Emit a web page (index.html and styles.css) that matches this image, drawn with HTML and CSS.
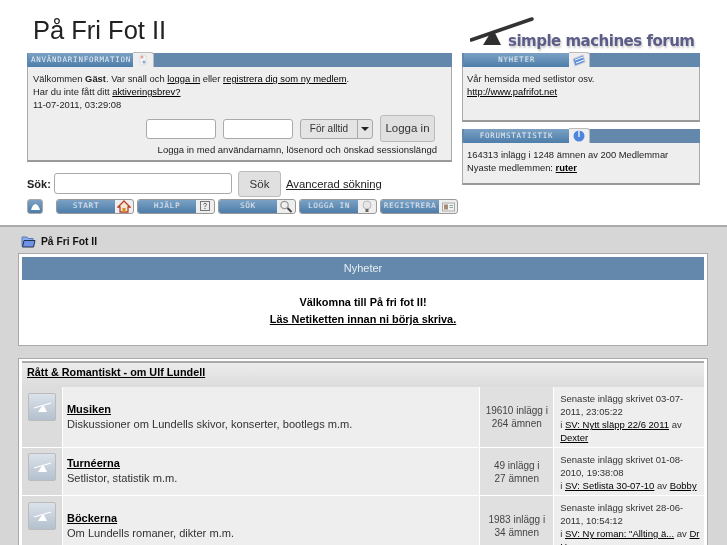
FILE: index.html
```html
<!DOCTYPE html>
<html lang="sv">
<head>
<meta charset="utf-8">
<title>På Fri Fot II</title>
<link rel="stylesheet" href="styles.css">
</head>
<body>
<header class="head">
  <div class="left">
    <h1 class="title">På Fri Fot II</h1>
    <section class="panel user">
      <div class="tabbar">
        <span class="tab wide">ANVÄNDARINFORMATION</span>
        <span class="tabicon">
          <svg width="12" height="12" viewBox="0 0 12 12"><rect x="3" y="1" width="6" height="10" rx="2" fill="#f6f6f6" stroke="#ddd"/><circle cx="5" cy="3" r="1.5" fill="#e8a0a0"/><circle cx="7" cy="8" r="1.6" fill="#8fa8cc"/></svg>
        </span>
      </div>
      <div class="body">
        <p>Välkommen <b>Gäst</b>. Var snäll och <a href="#">logga in</a> eller <a href="#">registrera dig som ny medlem</a>.</p>
        <p>Har du inte fått ditt <a href="#">aktiveringsbrev?</a></p>
        <p>11-07-2011, 03:29:08</p>
        <div class="login">
          <span class="input f70"></span>
          <span class="input f70"></span>
          <span class="select"><span class="seltext">För alltid</span><span class="selarrow"></span></span>
          <span class="btn b-login">Logga in</span>
        </div>
        <p class="hint">Logga in med användarnamn, lösenord och önskad sessionslängd</p>
      </div>
    </section>
    <div class="search">
      <label class="slabel">Sök:</label>
      <span class="input f177"></span>
      <span class="btn b-search">Sök</span>
      <a href="#" class="adv">Avancerad sökning</a>
    </div>
    <nav class="menu">
      <span class="collapse"><svg width="9" height="6" viewBox="0 0 9 6"><path d="M0 6 C1 2 3 0 4.500 0 C6 0 8 2 9 6Z" fill="#fff"/></svg></span>
      <span class="mitem"><span class="mlabel">START</span><span class="micon">
        <svg width="14" height="13" viewBox="0 0 14 13"><path d="M7 1 L1 7 H3 V12 H11 V7 H13Z" fill="#f4e7d0" stroke="#b5412a" stroke-width="1.300"/><rect x="5.500" y="8" width="3" height="4" fill="#d98a2b"/></svg>
      </span></span>
      <span class="mitem"><span class="mlabel">HJÄLP</span><span class="micon">
        <svg width="12" height="13" viewBox="0 0 12 13"><rect x="1.500" y="1.500" width="9" height="9" fill="#eee" stroke="#777"/><path d="M4.500 4.500 C5 3 7.500 3 7.500 4.500 C7.500 5.500 6 5.500 6 7" fill="none" stroke="#555"/><rect x="5.500" y="8" width="1" height="1" fill="#555"/></svg>
      </span></span>
      <span class="mitem"><span class="mlabel">SÖK</span><span class="micon">
        <svg width="14" height="13" viewBox="0 0 14 13"><circle cx="5.500" cy="5" r="3.700" fill="#f0f0f0" stroke="#999" stroke-width="1.300"/><path d="M8.500 8 L12.500 12" stroke="#444" stroke-width="2"/></svg>
      </span></span>
      <span class="mitem"><span class="mlabel">LOGGA IN</span><span class="micon">
        <svg width="12" height="13" viewBox="0 0 12 13"><circle cx="6" cy="5" r="4" fill="#e6e6e6" stroke="#bbb"/><rect x="4.500" y="9" width="3" height="3" fill="#666"/></svg>
      </span></span>
      <span class="mitem"><span class="mlabel">REGISTRERA</span><span class="micon">
        <svg width="13" height="12" viewBox="0 0 13 12"><rect x=".5" y="2" width="12" height="8" fill="#f1f1f1" stroke="#aaa"/><rect x="2" y="3.500" width="4" height="5" fill="#a98a7a"/><path d="M7.500 4.500H11M7.500 6.500H11" stroke="#8aa"/></svg>
      </span></span>
    </nav>
  </div>
  <div class="right">
    <div class="logo">
      <svg class="scale" width="66" height="30" viewBox="0 0 66 30"><path d="M1 23 L62 2" stroke="#333" stroke-width="3.500" stroke-linecap="round"/><path d="M21 15 L13 28 H31 L24 14Z" fill="#2f2f2f"/></svg>
      <span class="logotext">simple machines forum</span>
    </div>
    <section class="panel news">
      <div class="tabbar">
        <span class="tab narrow">NYHETER</span>
        <span class="tabicon">
          <svg width="14" height="13" viewBox="0 0 14 13"><path d="M1 5 L11 1 L13 8 L3 12Z" fill="#5f92d8" stroke="#c9c9d6"/><path d="M3 6 L11 3M4 9 L12 6" stroke="#fff"/></svg>
        </span>
      </div>
      <div class="body">
        <p>Vår hemsida med setlistor osv.</p>
        <p><a href="#">http://www.pafrifot.net</a></p>
      </div>
    </section>
    <section class="panel stats">
      <div class="tabbar">
        <span class="tab narrow">FORUMSTATISTIK</span>
        <span class="tabicon">
          <svg width="12" height="12" viewBox="0 0 12 12"><circle cx="6" cy="6" r="5.500" fill="#4f86dc"/><rect x="5.300" y="0" width="1.400" height="7" fill="#e8eefa"/></svg>
        </span>
      </div>
      <div class="body">
        <p><b class="num">164313</b> inlägg i <b class="num">1248</b> ämnen av <b class="num">200</b> Medlemmar</p>
        <p>Nyaste medlemmen: <a href="#"><b>ruter</b></a></p>
      </div>
    </section>
  </div>
</header>

<main class="page">
  <div class="crumb">
    <svg width="15" height="13" viewBox="0 0 15 13"><path d="M1 2 H6 L7.500 3.500 H12 V11 H1Z" fill="#8aaaf0" stroke="#5a76b8"/><path d="M3 5.500 H14 L12.500 12 H1.500Z" fill="#6f93e4" stroke="#22304f"/></svg>
    <a href="#">På Fri Fot II</a>
  </div>

  <section class="box newsbox">
    <div class="boxhead">Nyheter</div>
    <div class="newsbody">
      <p><b>Välkomna till På fri fot II!</b></p>
      <p><a href="#"><b>Läs Netiketten innan ni börja skriva.</b></a></p>
    </div>
  </section>

  <section class="box boards">
    <div class="cat"><a href="#">Rått &amp; Romantiskt - om Ulf Lundell</a></div>

    <div class="row r1">
      <div class="c-icon"><span class="bicon"><svg width="19" height="13" viewBox="0 0 19 13"><path d="M1 7 L18 2" stroke="#fff" stroke-width="1.200"/><path d="M9 5 L5 11 H14 L11 5Z" fill="#fff"/></svg></span></div>
      <div class="c-main"><h3><a href="#">Musiken</a></h3><p>Diskussioner om Lundells skivor, konserter, bootlegs m.m.</p></div>
      <div class="c-stat">19610 inlägg i<br>264 ämnen</div>
      <div class="c-last">Senaste inlägg skrivet 03-07-2011, 23:05:22<br>i <a href="#">SV: Nytt släpp 22/6 2011</a> av <a href="#">Dexter</a></div>
    </div>

    <div class="row r2">
      <div class="c-icon"><span class="bicon"><svg width="19" height="13" viewBox="0 0 19 13"><path d="M1 7 L18 2" stroke="#fff" stroke-width="1.200"/><path d="M9 5 L5 11 H14 L11 5Z" fill="#fff"/></svg></span></div>
      <div class="c-main"><h3><a href="#">Turnéerna</a></h3><p>Setlistor, statistik m.m.</p></div>
      <div class="c-stat">49 inlägg i<br>27 ämnen</div>
      <div class="c-last">Senaste inlägg skrivet 01-08-2010, 19:38:08<br>i <a href="#">SV: Setlista 30-07-10</a> av <a href="#">Bobby</a></div>
    </div>

    <div class="row r3">
      <div class="c-icon"><span class="bicon"><svg width="19" height="13" viewBox="0 0 19 13"><path d="M1 7 L18 2" stroke="#fff" stroke-width="1.200"/><path d="M9 5 L5 11 H14 L11 5Z" fill="#fff"/></svg></span></div>
      <div class="c-main"><h3><a href="#">Böckerna</a></h3><p>Om Lundells romaner, dikter m.m.</p></div>
      <div class="c-stat">1983 inlägg i<br>34 ämnen</div>
      <div class="c-last">Senaste inlägg skrivet 28-06-2011, 10:54:12<br>i <a href="#">SV: Ny roman: "Allting ä...</a> av <a href="#">Dr</a> <a href="#">House</a></div>
    </div>
  </section>
</main>
</body>
</html>
```

FILE: styles.css
```css
* { box-sizing: border-box; }
html, body { margin: 0; padding: 0; height: 545px; overflow: hidden; }
body { font-family: "Liberation Sans", Arial, sans-serif; font-size: 10px; color: #000; background: #d6d6d6; filter: blur(.35px); }
p { margin: 0; }
a { color: #000; text-decoration: underline; }

.head { display: flex; background: #fff; height: 227px; padding-left: 27px; border-bottom: 2px solid #aaa; }
.left { width: 425px; }
.right { width: 238px; margin-left: 10px; }

.title { margin: 0; height: 53px; padding: 14px 0 0 6px; font-size: 25.500px; line-height: 32px; font-weight: normal; color: #222; }

.panel { background: #eee; border: 1px solid #aaa; border-top: 0; border-bottom: 2px solid #999; }
.tabbar { display: flex; height: 14px; background: #6488ab; margin: 0 -1px; }
.tab { display: block; height: 14px; padding: 0 0 0 3px; font-family: "DejaVu Sans Mono", monospace; font-size: 7.500px; line-height: 13px; color: #e8eef4; background: linear-gradient(#7ba1c4, #4d7da9); white-space: nowrap; letter-spacing: .75px; }
.tab.wide { width: 105px; margin-left: 1px; }
.tab.narrow { width: 105px; margin-left: 2px; text-align: center; padding: 0; }
.tabicon { width: 21px; height: 15px; background: #eee; border: 1px solid #bbb; border-bottom: 0; border-left: 0; border-radius: 0 3px 0 0; display: flex; justify-content: center; align-items: center; margin-top: -1px; }

.body { padding: 5px 4px 0 5px; line-height: 13px; font-size: 9.400px; color: #222; }
.right .body { padding-left: 4px; }
.user { height: 109px; }
.login { display: flex; align-items: center; justify-content: flex-end; gap: 7px; margin-top: 4px; padding-right: 12px; height: 28px; }
.input { display: inline-block; height: 20px; background: #fff; border: 1px solid #aaa; border-radius: 3px; }
.f70 { width: 70px; }
.select { display: flex; width: 73px; height: 20px; border: 1px solid #aaa; border-radius: 3px; background: #e4e4e4; font-size: 10px; }
.seltext { flex: 1; text-align: center; line-height: 18px; color: #333; }
.selarrow { width: 15px; border-left: 1px solid #aaa; position: relative; }
.selarrow::after { content: ""; position: absolute; left: 3px; top: 7px; border: 4px solid transparent; border-top: 4px solid #222; border-bottom: 0; }
.btn { display: inline-flex; align-items: center; justify-content: center; background: #e0e0e0; border: 1px solid #bbb; border-radius: 3px; color: #333; font-size: 11.500px; }
.b-login { width: 55px; height: 27px; margin-top: -1px; }
.hint { text-align: right; padding-right: 10px; font-size: 9.500px; }

.search { display: flex; align-items: center; height: 25px; margin-top: 9px; }
.slabel { font-weight: bold; font-size: 11px; color: #222; width: 27px; }
.f177 { width: 178px; height: 21px; }
.b-search { width: 43px; height: 26px; margin-left: 6px; }
.adv { font-size: 11.300px; margin-left: 5px; color: #222; }

.menu { display: flex; gap: 3px; margin-top: 3px; height: 15px; }
.collapse { flex: none; width: 16px; height: 15px; margin-right: 10px; background: linear-gradient(#7ba1c4, #4d7da9); border: 1px solid #aaa; border-radius: 3px; display: flex; align-items: center; justify-content: center; }
.mitem { flex: none; display: flex; width: 78px; height: 15px; border: 1px solid #999; border-radius: 3px; background: #eee; overflow: hidden; }
.mlabel { flex: 1; background: linear-gradient(#7ba1c4, #4d7da9); color: #e8eef4; font-family: "DejaVu Sans Mono", monospace; font-size: 7.500px; line-height: 12px; letter-spacing: .75px; text-align: center; white-space: nowrap; }
.micon { width: 18px; display: flex; align-items: center; justify-content: center; }

.logo { height: 53px; position: relative; display: flex; align-items: flex-end; }
.scale { position: absolute; left: 8px; top: 17px; }
.logotext { margin-left: 46px; padding-bottom: 3px; font-family: "DejaVu Sans", sans-serif; font-weight: bold; font-size: 15px; letter-spacing: -.5px; line-height: 18px; color: #5c5c88; text-shadow: 1px 2px 2px #ccc; white-space: nowrap; }
.news { height: 69px; }
.stats { height: 56px; margin-top: 7px; }
.stats .num { font-weight: normal; }

.page { padding: 0 19px 0 18px; }
.crumb { height: 26px; display: flex; align-items: center; gap: 5px; padding: 2px 0 0 3px; }
.crumb a { font-weight: bold; font-size: 10.300px; text-decoration: none; color: #111; }
.box { background: #fff; border: 1px solid #aaa; padding: 3px 3px 0; }
.newsbox { height: 93px; }
.boxhead { height: 23px; background: #6488ab; color: #e8eef4; text-align: center; font-size: 11px; line-height: 23px; }
.newsbody { text-align: center; font-size: 10.900px; line-height: 17px; padding-top: 14px; }
.boards { margin-top: 12px; height: 300px; padding-top: 2px; }
.cat { height: 26px; background: linear-gradient(#ececec, #dcdcdc); border-top: 2px solid #aaa; padding-left: 5px; line-height: 18px; font-weight: bold; font-size: 10.800px; }
.row { display: flex; gap: 1px; margin-bottom: 1px; background: #fff; }
.r1 { height: 60px; }
.r2 { height: 47px; }
.r3 { height: 60px; }
.c-icon { width: 40px; background: #dcdcdc; padding: 6px 0 0 6px; }
.r2 .c-icon { padding-top: 5px; }
.bicon { display: flex; width: 28px; height: 28px; align-items: center; justify-content: center; background: linear-gradient(#dbe2ea, #b3c0ce); border: 1px solid #bbb; border-radius: 2px; }
.c-main { width: 417px; background: #eee; padding: 15px 5px 0 4px; font-size: 11.100px; line-height: 15px; color: #333; }
.r2 .c-main { padding-top: 8px; }
.c-main h3 { margin: 0; font-size: 11px; font-weight: bold; line-height: 15px; }
.c-stat { width: 73px; background: #e0e0e0; text-align: center; font-size: 10px; line-height: 13px; display: flex; align-items: center; justify-content: center; color: #444; }
.c-last { width: 150px; background: #eee; padding: 5px 3px 0 6px; font-size: 9.500px; line-height: 13px; color: #333; }
```
